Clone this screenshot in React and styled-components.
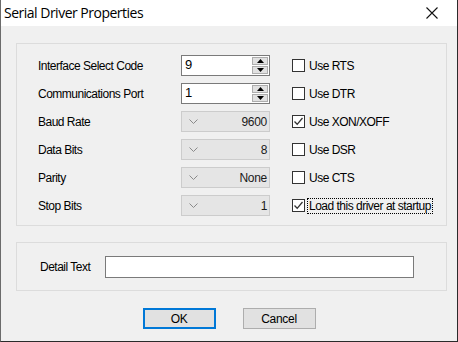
import React from "react";
import styled, { createGlobalStyle } from "styled-components";

const GlobalStyle = createGlobalStyle`
  html, body {
    margin: 0;
    padding: 0;
    background: #ffffff;
  }
  body {
    font-family: "Liberation Sans", Arial, sans-serif;
  }
`;

const rows = [
  { label: "Interface Select Code", kind: "spin", value: "9", option: "Use RTS", checked: false },
  { label: "Communications Port", kind: "spin", value: "1", option: "Use DTR", checked: false },
  { label: "Baud Rate", kind: "combo", value: "9600", option: "Use XON/XOFF", checked: true },
  { label: "Data Bits", kind: "combo", value: "8", option: "Use DSR", checked: false },
  { label: "Parity", kind: "combo", value: "None", option: "Use CTS", checked: false },
  { label: "Stop Bits", kind: "combo", value: "1", option: "Load this driver at startup", checked: true, focused: true },
];

function Check({ checked }) {
  return (
    <Box>
      {checked && (
        <svg width="11" height="11" viewBox="0 0 11 11">
          <path d="M1.5 5.5 L4.2 8.3 L9.5 2" fill="none" stroke="#333" strokeWidth="1.3" />
        </svg>
      )}
    </Box>
  );
}

function Arrow({ up }) {
  return (
    <svg width="7" height="4" viewBox="0 0 7 4">
      <path d={up ? "M0 4 L3.5 0 L7 4 Z" : "M0 0 L7 0 L3.5 4 Z"} fill="#000" />
    </svg>
  );
}

function Control({ kind, value }) {
  if (kind === "spin") {
    return (
      <Spin>
        <SpinValue>{value}</SpinValue>
        <SpinButtons>
          <SpinBtn><Arrow up /></SpinBtn>
          <SpinBtn><Arrow /></SpinBtn>
        </SpinButtons>
      </Spin>
    );
  }
  return (
    <Combo>
      <svg width="9" height="5" viewBox="0 0 9 5">
        <path d="M0.5 0.5 L4.5 4.5 L8.5 0.5" fill="none" stroke="#8a8a8a" strokeWidth="1" />
      </svg>
      <ComboValue>{value}</ComboValue>
    </Combo>
  );
}

export default function App() {
  return (
    <>
      <GlobalStyle />
      <Window>
        <TitleBar>
          <Title>Serial Driver Properties</Title>
          <Close>
            <svg width="12" height="12" viewBox="0 0 12 12">
              <path d="M0.5 0.5 L11.5 11.5 M11.5 0.5 L0.5 11.5" stroke="#111" strokeWidth="1.1" />
            </svg>
          </Close>
        </TitleBar>
        <Body>
          <Group>
            <Settings>
              {rows.map((r) => (
                <React.Fragment key={r.label}>
                  <Label>{r.label}</Label>
                  <Control kind={r.kind} value={r.value} />
                  <Option>
                    <Check checked={r.checked} />
                    <OptionText $focused={r.focused}>{r.option}</OptionText>
                  </Option>
                </React.Fragment>
              ))}
            </Settings>
          </Group>
          <DetailGroup>
            <DetailLabel>Detail Text</DetailLabel>
            <TextBox />
          </DetailGroup>
          <Buttons>
            <Button $default>OK</Button>
            <Button>Cancel</Button>
          </Buttons>
        </Body>
      </Window>
    </>
  );
}

const Window = styled.div`
  width: 458px;
  height: 342px;
  box-sizing: border-box;
  border: 1px solid #6b6b6b;
  border-right-color: #2b2b2b;
  border-bottom-color: #2b2b2b;
  border-top: none;
  display: flex;
  flex-direction: column;
  background: #f0f0f0;
  overflow: hidden;
`;

const TitleBar = styled.div`
  height: 26px;
  flex: none;
  background: #ffffff;
  display: flex;
  align-items: center;
  padding-left: 3px;
`;

const Title = styled.div`
  font-family: "Open Sans", "Noto Sans", sans-serif;
  font-size: 14px;
  letter-spacing: -0.5px;
  color: #000;
  flex: 1;
  padding-bottom: 1px;
`;

const Close = styled.div`
  width: 46px;
  height: 26px;
  display: flex;
  align-items: center;
  justify-content: center;
  margin-right: 2px;
`;

const Body = styled.div`
  flex: 1;
  padding: 17px 10px 0 15px;
  display: flex;
  flex-direction: column;
`;

const Group = styled.div`
  height: 183px;
  box-sizing: border-box;
  border: 1px solid #dcdcdc;
  padding: 11px 0 0 21px;
`;

const Settings = styled.div`
  display: grid;
  grid-template-columns: 121px 89px auto;
  column-gap: 22px;
  grid-auto-rows: 21px;
  row-gap: 7px;
  align-items: center;
`;

const Label = styled.div`
  font-size: 12px;
  letter-spacing: -0.5px;
  color: #000;
  white-space: nowrap;
`;

const Spin = styled.div`
  height: 21px;
  box-sizing: border-box;
  border: 1px solid #7a7a7a;
  background: #fff;
  display: flex;
  align-items: stretch;
`;

const SpinValue = styled.div`
  flex: 1;
  font-size: 13px;
  padding-left: 3px;
  line-height: 18px;
`;

const SpinButtons = styled.div`
  width: 16px;
  display: flex;
  flex-direction: column;
  gap: 1px;
  padding: 1px 1px 1px 0;
`;

const SpinBtn = styled.div`
  flex: 1;
  background: #e1e1e1;
  border: 1px solid #adadad;
  display: flex;
  align-items: center;
  justify-content: center;
`;

const Combo = styled.div`
  height: 21px;
  box-sizing: border-box;
  border: 1px solid #cccccc;
  background: #e5e5e5;
  display: flex;
  align-items: center;
  padding: 0 2px 0 7px;
`;

const ComboValue = styled.div`
  flex: 1;
  text-align: right;
  font-size: 12px;
  letter-spacing: -0.3px;
  color: #1a1a1a;
`;

const Option = styled.div`
  display: flex;
  align-items: center;
  gap: 3px;
  white-space: nowrap;
`;

const Box = styled.div`
  width: 13px;
  height: 13px;
  flex: none;
  box-sizing: border-box;
  border: 1px solid #333;
  background: #fff;
  display: flex;
  align-items: center;
  justify-content: center;
`;

const OptionText = styled.span`
  font-size: 12px;
  letter-spacing: -0.5px;
  color: #000;
  padding: 0 1px;
  outline: ${(p) => (p.$focused ? "1px dotted #000" : "none")};
`;

const DetailGroup = styled.div`
  margin-top: 16px;
  height: 49px;
  box-sizing: border-box;
  border: 1px solid #dcdcdc;
  display: flex;
  align-items: center;
  padding-left: 23px;
`;

const DetailLabel = styled.div`
  width: 65px;
  font-size: 12px;
  letter-spacing: -0.5px;
  color: #000;
`;

const TextBox = styled.div`
  width: 309px;
  height: 22px;
  box-sizing: border-box;
  border: 1px solid #7a7a7a;
  background: #fff;
`;

const Buttons = styled.div`
  margin-top: 17px;
  display: flex;
  justify-content: center;
  gap: 27px;
  margin-left: -5px;
`;

const Button = styled.div`
  width: 73px;
  height: 21px;
  box-sizing: border-box;
  background: #e1e1e1;
  border: ${(p) => (p.$default ? "2px solid #0078d7" : "1px solid #adadad")};
  display: flex;
  align-items: center;
  justify-content: center;
  font-size: 12px;
  letter-spacing: -0.3px;
  color: #000;
`;
